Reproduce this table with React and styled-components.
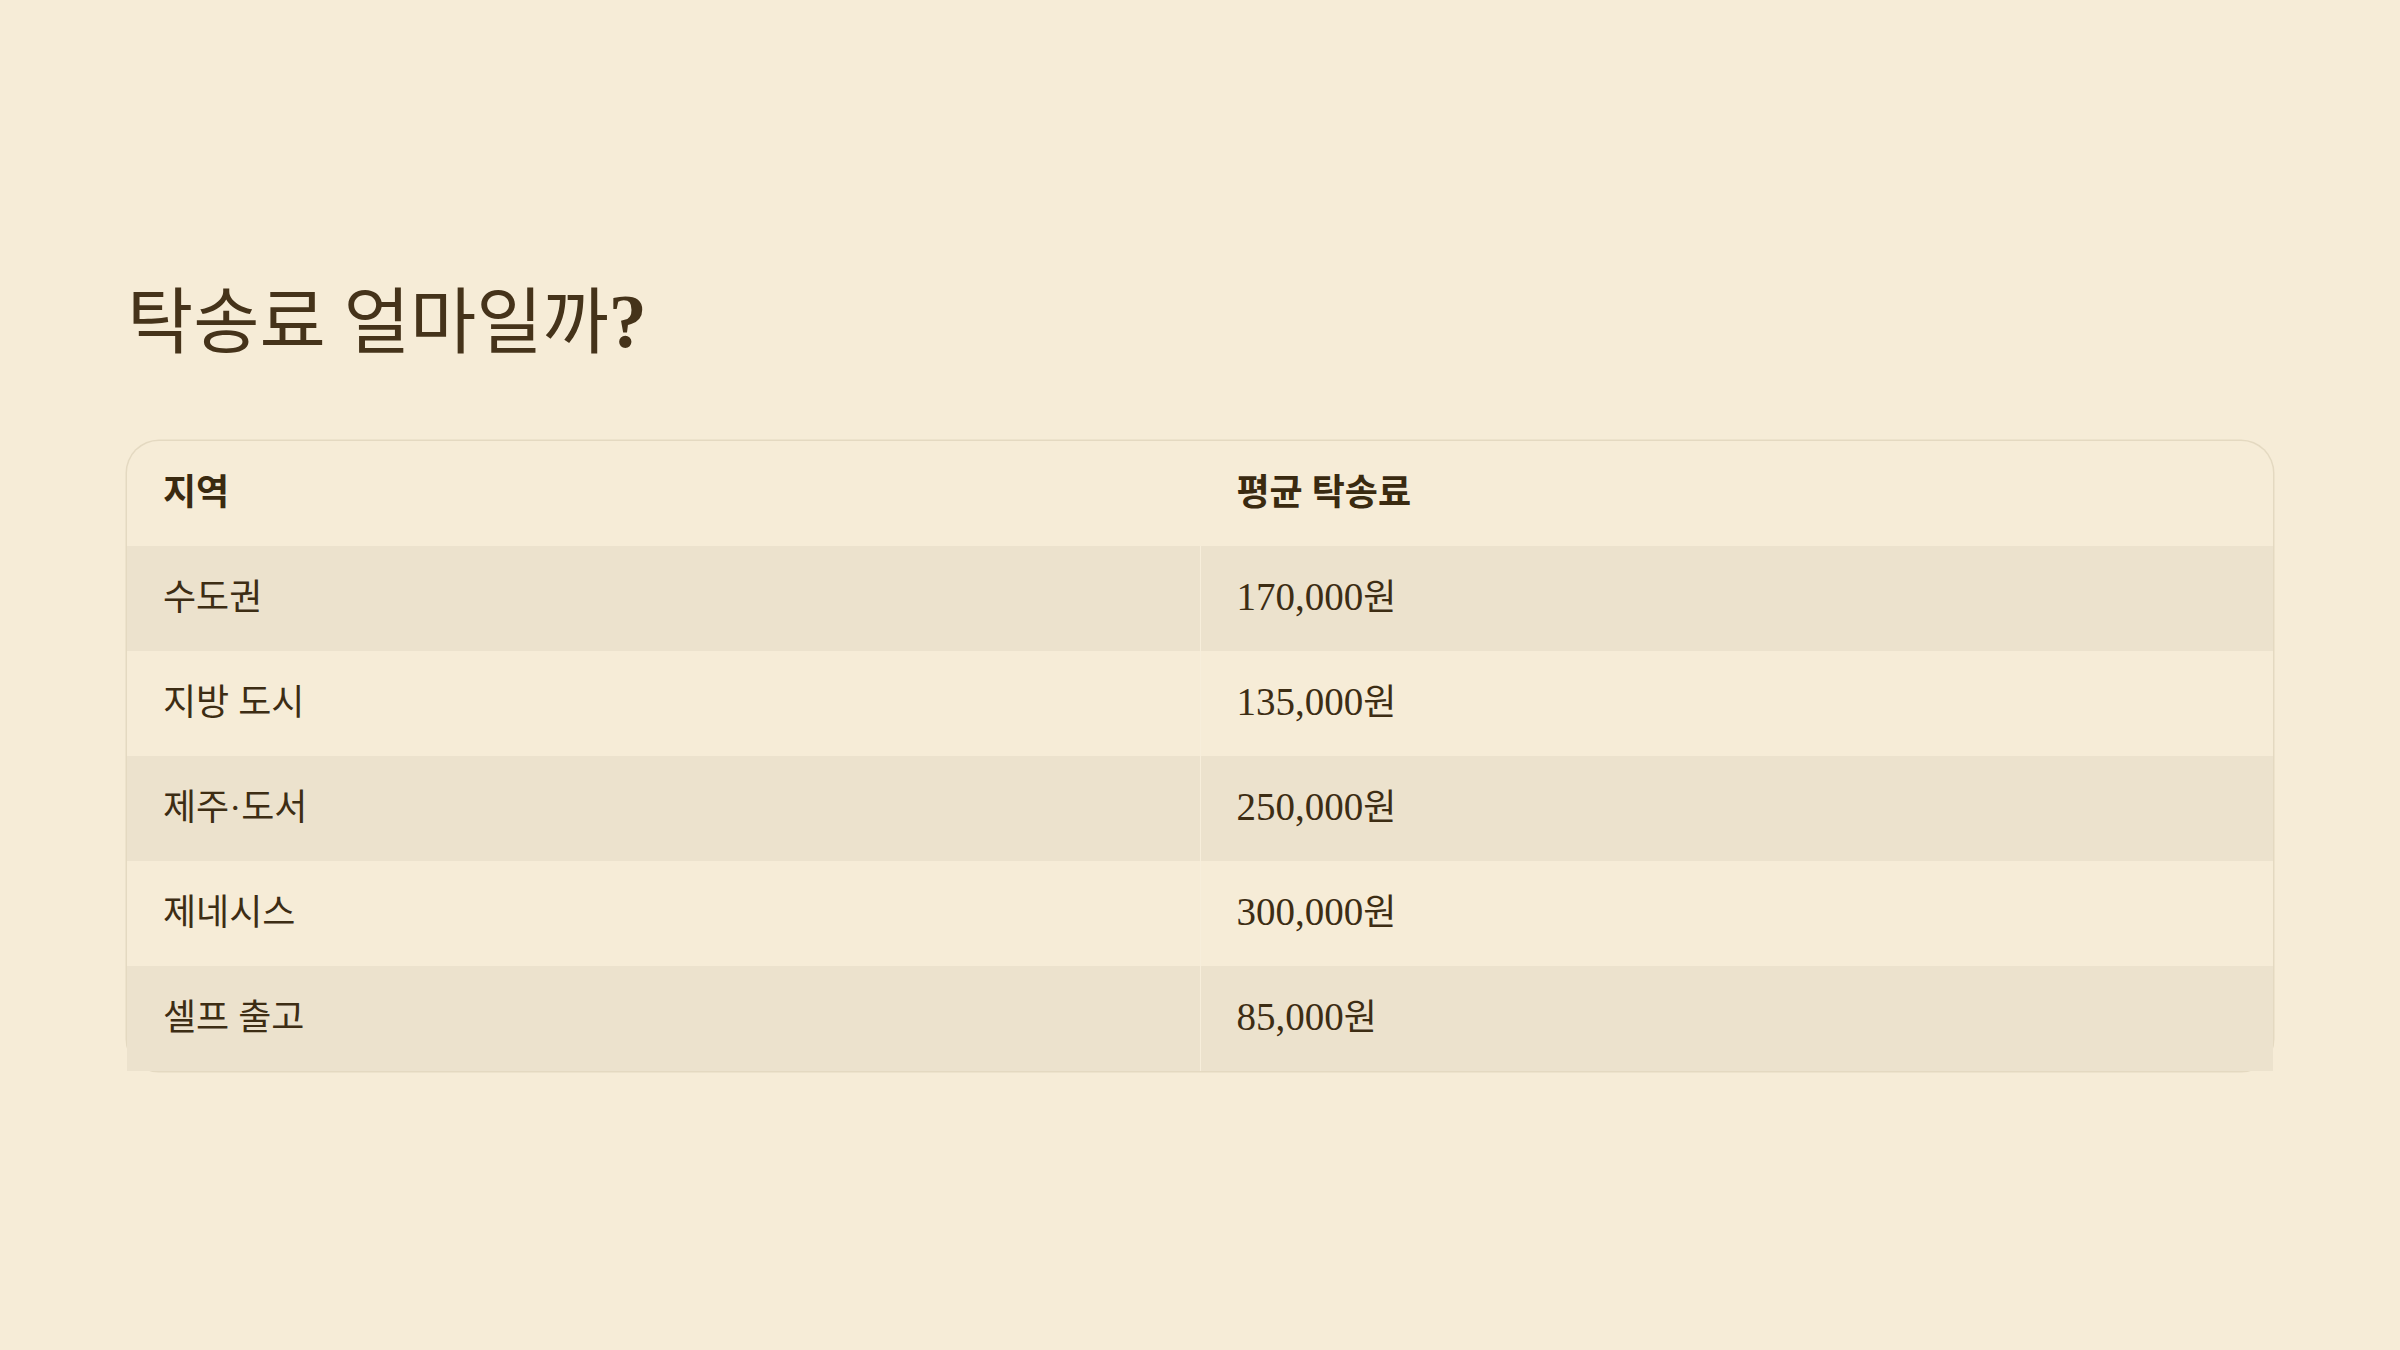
import React from 'react';
import styled, { createGlobalStyle } from 'styled-components';

const GlobalStyle = createGlobalStyle`
  html, body {
    margin: 0;
    padding: 0;
    background: #f6ecd7;
  }
  body {
    font-family: "Liberation Serif", "Noto Sans CJK KR", serif;
    color: #3d2d14;
  }
`;

const Page = styled.div`
  min-height: 1350px;
  box-sizing: border-box;
  padding: 280px 127px 0 127px;
  background: #f6ecd7;
`;

const Title = styled.h1`
  margin: 0 0 75px 0;
  font-size: 72px;
  line-height: 1.2;
  font-weight: 400;
  color: #45331a;
`;

const Mark = styled.span`
  font-size: 76px;
  line-height: 1;
  font-weight: 700;
`;

const Table = styled.table`
  width: 100%;
  border-collapse: collapse;
  border-radius: 32px;
  box-shadow: 0 0 0 1.5px #e4d9c1;
  table-layout: fixed;
`;

const HeadCell = styled.th`
  height: 105px;
  box-sizing: border-box;
  padding: 0 36px;
  text-align: left;
  font-size: 36px;
  line-height: 1.2;
  font-weight: 700;
  color: #3a2a10;
  border-left: ${(p) => (p.$divided ? '1px solid #f6ecd7' : 'none')};
`;

const Row = styled.tr`
  background: ${(p) => (p.$striped ? '#ece2cd' : '#f6ecd7')};
`;

const Cell = styled.td`
  height: 105px;
  box-sizing: border-box;
  padding: 0 36px;
  font-size: 36px;
  line-height: 1.2;
  color: #3d2d14;
  border-left: ${(p) => (p.$divided ? '1px solid #f7eedb' : 'none')};
`;

const Digits = styled.span`
  font-size: 39px;
  line-height: 1;
`;

const rows = [
  ['수도권', '170,000'],
  ['지방 도시', '135,000'],
  ['제주·도서', '250,000'],
  ['제네시스', '300,000'],
  ['셀프 출고', '85,000'],
];

const App = () => {
  return (
    <Page>
      <GlobalStyle />
      <Title>탁송료 얼마일까<Mark>?</Mark></Title>
      <Table>
        <thead>
          <tr>
            <HeadCell>지역</HeadCell>
            <HeadCell $divided>평균 탁송료</HeadCell>
          </tr>
        </thead>
        <tbody>
          {rows.map((r, i) => (
            <Row key={i} $striped={i % 2 === 0}>
              <Cell>{r[0]}</Cell>
              <Cell $divided><Digits>{r[1]}</Digits>원</Cell>
            </Row>
          ))}
        </tbody>
      </Table>
    </Page>
  );
};

export default App;
